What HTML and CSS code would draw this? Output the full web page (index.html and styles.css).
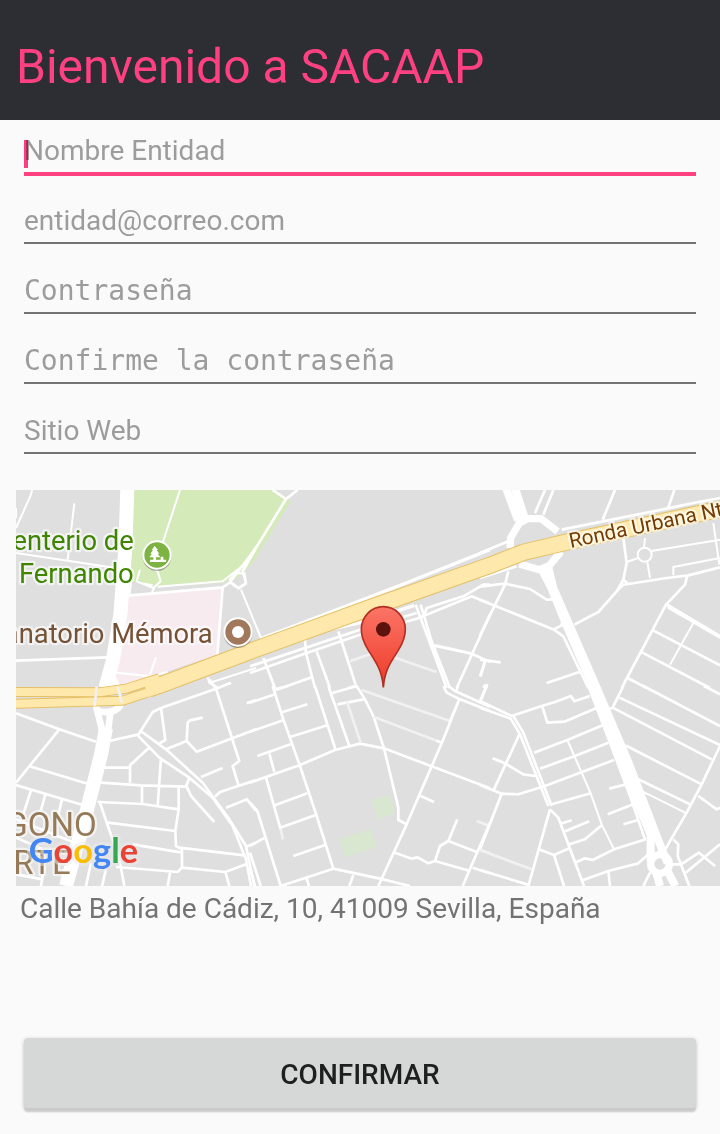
FILE: index.html
```html
<!DOCTYPE html>
<html lang="es">
<head>
<meta charset="utf-8">
<meta name="viewport" content="width=device-width, initial-scale=1">
<title>Bienvenido a SACAAP</title>
<link rel="stylesheet" href="styles.css">
</head>
<body>
<header class="app-bar"><h1 class="app-title">Bienvenido a SACAAP</h1></header>
<form class="screen">
  <div class="fields">
    <div class="field field-active">
      <input class="input" type="text" placeholder="Nombre Entidad" aria-label="Nombre Entidad">
      <span class="cursor"></span>
    </div>
    <div class="field"><input class="input" type="email" placeholder="entidad@correo.com" aria-label="Correo"></div>
    <div class="field"><input class="input input-mono" type="password" placeholder="Contraseña" aria-label="Contraseña"></div>
    <div class="field"><input class="input input-mono" type="password" placeholder="Confirme la contraseña" aria-label="Confirme la contraseña"></div>
    <div class="field"><input class="input" type="url" placeholder="Sitio Web" aria-label="Sitio Web"></div>
  </div>
  <svg class="map" viewBox="0 6 2112 1188" role="img" aria-label="Mapa">
    <defs>
      <linearGradient id="pin" x1="0" y1="0" x2="0" y2="1">
        <stop offset="0" stop-color="#fb7567"/><stop offset="1" stop-color="#ee3a28"/>
      </linearGradient>
    </defs>
    <rect class="land" y="6" width="2112" height="1188"/>
    <path class="park" d="M355 6H770L824 40 708 228 660 272 620 285 420 298 341 278Z"/>
    <path class="rose" d="M335 320 620 300 604 500 320 594 296 590Z"/>
    <path class="grass" d="M1065 936 1120 919 1138 975 1086 995ZM968 1054 1063 1023 1082 1077 986 1109Z"/>

    <!-- north-west -->
    <g class="road thin">
      <path d="M50 0 44 22 0 120M0 60V90M175 46 155 215M0 195 300 240"/>
      <path d="M492 6 425 210M372 245 362 280 412 300 434 280 425 250 400 235M345 285 340 322M372 285 410 292"/>
      <path d="M425 296 620 280 690 225 720 175M640 275 650 290 668 302 690 288 686 256 660 255 640 275M675 305 735 450M415 300 405 318"/>
      <path d="M420 508 402 560M300 554 402 565 455 552M575 568 580 585 605 598M580 585 720 540"/>
    </g>
    <g class="road">
      <path d="M0 518 275 508M335 323 620 298 640 285 720 180M620 300 604 500M640 280 668 300 690 285 680 250 720 180"/>
      <path d="M700 212 810 33 770 6M810 33 845 6"/>
    </g>
    <g class="road wide">
      <path d="M735 452 950 370 1170 285 1422 185M870 440 1050 400 1195 352M870 435 1090 360"/>
    </g>

    <!-- centre, upper row -->
    <g class="road" transform="translate(702)">
      <path d="M0 555 170 495 330 440 500 392 665 325 720 347"/>
      <path d="M0 535 330 425 500 375M520 390 530 360 640 325 700 290 720 290M265 430 320 600M165 455 168 495 195 600M40 510 75 600M80 605 185 568M200 490 240 600"/>
      <path class="soft" d="M300 520 370 495M430 508 560 552M560 473 665 497M295 600 320 590"/>
      <path d="M497 350 590 600M512 350 545 460 600 600M550 472 665 497 720 522M720 380 620 600M705 520 692 565M706 590 700 600"/>
    </g>

    <!-- north-east -->
    <g class="road" transform="translate(1392)">
      <path d="M0 195 85 160M195 6 165 75M220 6 190 80M405 6 368 95M245 125 560 62 640 45 720 30M583 6 565 58"/>
      <path d="M0 270 110 235M270 175 720 85M85 250 75 290 0 442M0 296 75 287 150 303 200 335 218 334M0 335 222 425 250 445 325 600M220 425 245 412 250 380"/>
      <path d="M283 410 355 372 410 310 430 275 440 225 430 150M410 310 430 290 445 288 430 275M445 288 560 270 625 262 720 238"/>
      <path class="thin" d="M495 150 492 178M510 190 720 155M440 222 475 210M502 222 510 270M580 262V237L720 210M700 105 718 230"/>
      <circle cx="494" cy="200" r="21" class="thin"/>
      <path d="M622 262 615 290 558 350 425 600M558 348 720 444M515 425 720 532M480 490 690 600M443 570 500 600M200 585 305 550M0 515 62 523M15 520 0 565M22 588 18 600"/>
      <path class="thin" d="M562 358 720 450M640 405 570 530"/>
    </g>

    <!-- south-west -->
    <g class="road" transform="translate(0 594)">
      <path d="M0 82 130 130 240 167M130 130 0 290M38 240 215 293M0 297 200 357M45 313 20 390M88 325 70 390M138 340 125 395M0 400 200 480M0 455 80 490"/>
      <path d="M280 165 368 145 410 78 435 66 600 8 580 -20M435 66 448 162 425 175M370 132 450 190 560 290 640 400 690 480 715 600"/>
      <path d="M365 148 430 215 520 275 590 335 650 420 690 520 705 600M402 182 342 238V290M265 245H342M255 290 375 298 510 302 520 275M435 215 425 360M378 298V355M512 302 525 330 595 408M245 348 380 354 488 370M488 305V370L478 435 480 480 498 490M250 345 310 520 325 600M275 410 478 435M350 475 498 500M490 485 685 508M498 490V545L485 558 300 543M498 545 628 558 690 535M628 558 640 600M462 560 455 600M225 530 210 600M270 550 258 600M0 565 80 580M85 540 75 600"/>
      <path d="M450 190 512 165 515 110 522 103 560 95M512 165 542 197 720 130M600 8 670 225 650 240 668 300M555 273 620 246M597 332 612 318 720 282M630 365 693 340 720 375M690 482 720 470M692 52 720 42M600 8 645 -10"/>
    </g>

    <!-- centre, lower row -->
    <g class="road" transform="translate(702 594)">
      <path d="M68 0 100 100 150 240 200 390 250 548M0 50 75 25M75 10 115 0M0 137 102 102M98 78 172 55M120 153 232 118M22 210 122 175M58 203 73 258M0 290 150 237 255 192 330 173 402 187 720 307"/>
      <path d="M195 0 257 192M235 0 298 180M245 22 320 0 345 40 370 90 402 187 445 365V402L470 415M262 55 340 40"/>
      <path class="soft" d="M290 45 332 170M335 12 600 105M370 92 570 168M680 405 715 418M690 492 720 502M92 430 99 460"/>
      <path d="M628 40 580 160 470 415 385 600M600 105 628 40M560 164 578 170M512 330 552 348M435 500 485 518 503 514 535 532 555 525 660 555M555 525 570 480 595 465 680 498M595 465 622 400M720 410 638 600M668 545 720 562"/>
      <path d="M48 275 92 430M75 358 172 322M90 425 195 388M130 510 225 477M0 350 22 375 92 600 250 548 390 578 480 600M0 480 45 455M0 500 32 600M310 567 298 600M170 578 177 600M0 545 15 600"/>
      <path d="M580 0 590 20 630 40 720 75M595 0 615 15 720 62M625 0 617 18M710 0 694 40"/>
    </g>

    <!-- south-east -->
    <g class="road" transform="translate(1392 594)">
      <path d="M0 45 95 90 185 60 225 48 273 30 283 46 330 30M0 65 92 98 120 145 205 360M20 0 0 45M100 90 130 140 215 360"/>
      <path d="M187 62 202 110 253 107 348 67M162 200 262 162 368 118M180 248 285 210 385 170M0 297 65 323 115 325 195 300 300 260 402 222M118 145 42 310M38 217 75 232 130 265 165 270M65 323 0 490M215 355 332 322"/>
      <path class="thin" d="M262 162 305 260 332 322 365 415 402 490"/>
      <path d="M210 370 145 600M210 370 235 395 312 600M242 413 275 403M250 438 328 406M268 475 315 460 365 418M176 490 222 507 268 487M222 507 252 600M285 530 315 517 338 522 402 490 498 460M310 582 385 555 475 532 505 505M385 555 390 600M0 552 150 598"/>
      <path class="soft" d="M0 408 20 418M0 492 155 550"/>
      <path d="M325 0 390 170 450 330 495 460M388 308 435 296M383 385 460 355M430 415 475 402"/>
      <path d="M430 0 398 65 385 70M398 65 695 220M418 35 720 177M490 0 720 120M672 0 720 25M425 178 440 180 665 295M455 270 632 356M720 180 665 295 620 380 550 500M655 330 710 370 720 365"/>
      <path class="thin" d="M470 308 620 382"/>
      <path d="M580 460 595 475 593 510 628 600M570 535H603L657 500 705 540M617 560 720 475M510 560 490 600"/>
    </g>

    <!-- avenues -->
    <g class="avenue">
      <path d="M334 0 328 180 313 380 290 520 268 600M270 720 255 800 212 970 150 1194"/>
      <path class="slim" d="M239 650 262 740M315 650C300 678 250 678 240 660M284 665 275 740M290 570 305 600"/>
      <path class="medium" d="M1470 0 1506 96M1497 0 1526 90"/>
      <path class="ring" d="M1482 180 1484 150 1510 105 1535 92 1575 92 1625 130M1510 228 1570 245 1600 233 1635 190"/>
      <path class="medium" d="M1575 240 1606 300 1655 420 1730 594 1830 860 1904 1040 1904 1120"/>
      <path class="medium" d="M1597 240 1612 300 1740 594 1836 820 1940 1090 1955 1125"/>
      <circle class="ring" cx="1932" cy="1128" r="28"/>
      <path class="medium" d="M1922 1158 1932 1194M1955 1150 1978 1194"/>
    </g>
    <g class="highway-edge">
      <path class="lane" d="M0 612 250 613 330 602 430 570M0 647 320 638 460 592"/>
      <path d="M400 602 430 592 702 490 1060 360 1422 232 1522 193 1657 161 2120 62"/>
    </g>
    <g class="highway">
      <path class="lane" d="M0 612 250 613 330 602 430 570M0 647 320 638 460 592"/>
      <path d="M390 605 430 592 702 490 1060 360 1422 232 1522 193 1657 161 2120 62"/>
    </g>
    <path class="road soft" d="M242 596 236 654M305 596 318 644"/>

    <g class="label green"><text x="353" y="185">enterio de</text><text x="353" y="284">Fernando</text></g>
    <text class="label brown" x="590" y="466">anatorio Mémora</text>
    <text class="label street" transform="translate(1664 180) rotate(-12)">Ronda Urbana Nt</text>
    <g class="label district"><text x="242" y="1043">GONO</text><text x="164" y="1157">RTE</text></g>

    <circle class="poi-shadow" cx="423" cy="206" r="43"/>
    <circle class="poi park-poi" cx="423" cy="201" r="41"/>
    <path fill="#fff" d="M416 174 426 186H422L430 197H425L433 208H420V215H434V206H442V215H450V222H402V215H412V208H400L408 197H403L411 186H407Z"/>
    <circle class="poi-shadow" cx="666" cy="437" r="43"/>
    <circle class="poi brown-poi" cx="666" cy="432" r="41"/>
    <circle cx="666" cy="432" r="18" fill="#fff"/>

    <path class="pin" d="M1102 598C1098 545 1078 520 1056 485 1043 464 1036 446 1036 424A66 68 0 0 1 1168 424C1168 446 1161 464 1148 485 1126 520 1106 545 1102 598Z"/>
    <circle cx="1102" cy="424" r="22" fill="#5c130d"/>

    <text class="brand" x="38" y="1125"><tspan fill="#4285f4">G</tspan><tspan fill="#ea4335">o</tspan><tspan fill="#fbbc05">o</tspan><tspan fill="#4285f4">g</tspan><tspan fill="#34a853">l</tspan><tspan fill="#ea4335">e</tspan></text>
  </svg>
  <p class="address">Calle Bahía de Cádiz, 10, 41009 Sevilla, España</p>
  <button class="confirm" type="button">CONFIRMAR</button>
</form>
</body>
</html>
```
FILE: styles.css
```css
* { box-sizing: border-box; }

body {
  margin: 0;
  min-height: 100vh;
  display: flex;
  flex-direction: column;
  background: #fafafa;
  font-family: Roboto, "Liberation Sans", sans-serif;
  font-size: 28px;
}

.app-bar {
  height: 120px;
  padding: 12px 16px 0;
  display: flex;
  align-items: center;
  background: #2d2e33;
}

.app-title {
  margin: 0;
  color: #ff4081;
  font-size: 48px;
  font-weight: 400;
}

.screen {
  flex: 1;
  display: flex;
  flex-direction: column;
}

.fields {
  display: flex;
  flex-direction: column;
  gap: 26px;
  padding: 10px 24px 36px;
}

.field {
  position: relative;
  display: flex;
}

.input {
  width: 100%;
  height: 44px;
  padding: 0 0 2px;
  border: 0;
  border-bottom: 2px solid #737373;
  border-radius: 0;
  background: transparent;
  color: #212121;
  font: inherit;
  outline: none;
}

.input::placeholder { color: #9c9c9c; opacity: 1; }

.input-mono { font-family: "DejaVu Sans Mono", monospace; }

.field-active .input {
  border-color: #ff4081;
  box-shadow: 0 2px #ff4081;
}

.cursor {
  position: absolute;
  left: 0;
  top: 10px;
  width: 4px;
  height: 28px;
  background: #ff4081;
  mix-blend-mode: multiply;
}

.map {
  display: block;
  margin-left: 16px;
  width: calc(100% - 16px);
  height: auto;
}

.land { fill: #dfdfdf; }
.park { fill: #d5eab9; }
.rose { fill: #f8ebf0; }
.grass { fill: #d9e7d1; }

.road {
  fill: none;
  stroke: #fff;
  stroke-width: 8;
  stroke-linejoin: round;
}

.thin { stroke-width: 6; }
.wide { stroke-width: 10; }
.soft { stroke: #f1f1f1; }

.avenue {
  fill: none;
  stroke: #fff;
  stroke-width: 42;
  stroke-linejoin: round;
}

.slim { stroke-width: 20; }
.medium { stroke-width: 24; }
.ring { stroke-width: 22; }

.highway-edge,
.highway {
  fill: none;
  stroke-linejoin: round;
}

.highway-edge { stroke: #e5c065; stroke-width: 52; }
.highway { stroke: #ffe8ac; stroke-width: 46; }
.highway-edge .lane { stroke-width: 30; }
.highway .lane { stroke-width: 24; }

.label {
  font-size: 82px;
  text-anchor: end;
  stroke: rgba(255, 255, 255, 0.6);
  stroke-width: 14;
  stroke-linejoin: round;
  paint-order: stroke;
}

.green { fill: #3f8500; }
.brown { fill: #755235; }
.district { fill: #967a58; font-size: 99px; }

.street {
  fill: #743c05;
  font-size: 62px;
  text-anchor: start;
}

.poi { stroke: #fff; stroke-width: 6; }
.poi-shadow { fill: rgba(0, 0, 0, 0.3); }
.park-poi { fill: #7cb342; }
.brown-poi { fill: #a1785c; }

.pin { fill: url(#pin); stroke: #b13022; stroke-width: 5; }

.brand {
  font-family: Lato, sans-serif;
  font-size: 103px;
  font-weight: 700;
  stroke: rgba(235, 235, 235, 0.5);
  stroke-width: 18;
  stroke-linejoin: round;
  paint-order: stroke;
}

.address {
  margin: 6px 20px 24px;
  color: #737373;
  line-height: 34px;
}

.confirm {
  height: 70px;
  margin: auto 24px 26px;
  padding: 2px 0 0;
  border: 0;
  border-radius: 4px;
  background: #d6d8d7;
  box-shadow: 0 4px 2px #c9c9c9, 0 1px 4px rgba(0, 0, 0, 0.2);
  color: #1e1f1f;
  font: inherit;
  font-weight: 500;
}
```
